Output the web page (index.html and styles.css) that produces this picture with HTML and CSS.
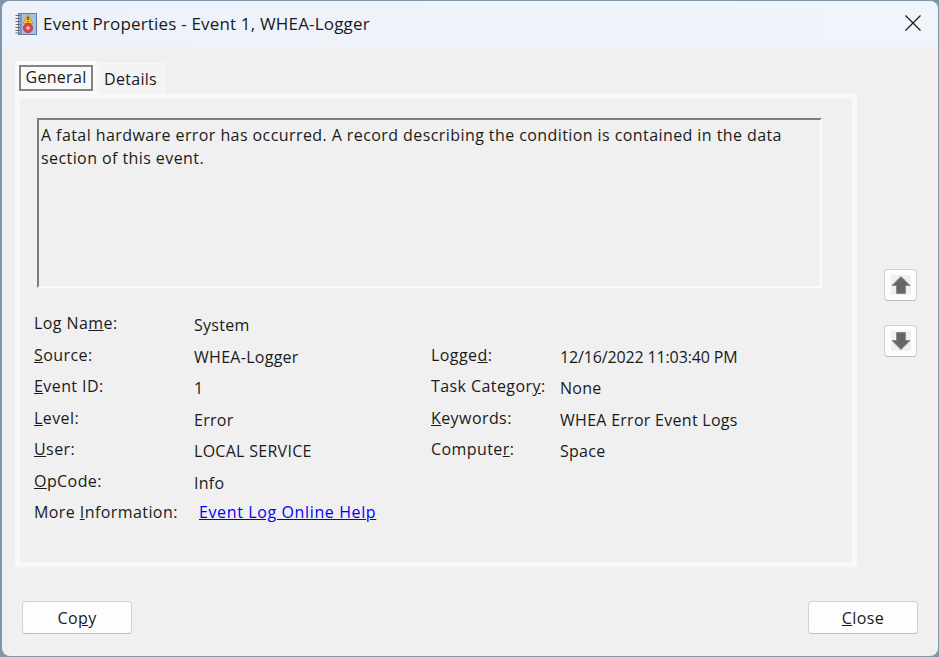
FILE: index.html
```html
<!DOCTYPE html>
<html lang="en">
<head>
<meta charset="utf-8">
<title>Event Properties - Event 1, WHEA-Logger</title>
<link rel="stylesheet" href="styles.css">
</head>
<body>
<div class="window">
  <header class="titlebar">
    <svg class="app-icon" width="22" height="24" viewBox="0 0 22 24">
      <rect x="3.500" y="1.500" width="18" height="21" fill="#a9c0e3" stroke="#5f7ba8"/>
      <path d="M6 1.500V22.500" stroke="#7f98c2" stroke-width="2"/>
      <path d="M.5 3.500h5M.5 6.500h5M.5 9.500h5M.5 12.500h5M.5 15.500h5M.5 18.500h5M.5 21h5" stroke="#6d6d6d" stroke-width="1.200"/>
      <path d="M13 1.500 18 11.500H8Z" fill="#f4c531" stroke="#a98a1a" stroke-width=".6"/>
      <path d="M13 4.500v3.500M13 9v1" stroke="#333" stroke-width="1.300"/>
      <circle cx="13" cy="16" r="4.700" fill="#d9474c" stroke="#a83034" stroke-width=".7"/>
      <circle cx="13" cy="16" r="1.700" fill="#f2c4c4"/>
    </svg>
    <span class="title">Event Properties - Event 1, WHEA-Logger</span>
    <svg class="close-x" width="16" height="16" viewBox="0 0 16 16">
      <path d="M.5.500 15.500 15.500M15.500.500.500 15.500" stroke="#1a1a1a" stroke-width="1.200" fill="none"/>
    </svg>
  </header>

  <main class="content">
    <div class="tabs">
      <div class="tab tab-active"><span class="tab-focus">General</span></div>
      <div class="tab">Details</div>
    </div>
    <div class="main-row">
      <section class="panel">
        <div class="description">A fatal hardware error has occurred. A record describing the condition is contained in the data section of this event.</div>
        <div class="fields">
          <span class="label">Log Na<u>m</u>e:</span><span class="value">System</span><span></span><span></span>
          <span class="label"><u>S</u>ource:</span><span class="value">WHEA-Logger</span><span class="label">Logge<u>d</u>:</span><span class="value value-date">12/16/2022 11:03:40 PM</span>
          <span class="label"><u>E</u>vent ID:</span><span class="value">1</span><span class="label">Task Categor<u>y</u>:</span><span class="value">None</span>
          <span class="label"><u>L</u>evel:</span><span class="value">Error</span><span class="label"><u>K</u>eywords:</span><span class="value">WHEA Error Event Logs</span>
          <span class="label"><u>U</u>ser:</span><span class="value">LOCAL SERVICE</span><span class="label">Compute<u>r</u>:</span><span class="value">Space</span>
          <span class="label"><u>O</u>pCode:</span><span class="value">Info</span><span></span><span></span>
          <span class="label">More <u>I</u>nformation:</span><a class="help-link" href="#">Event Log Online Help</a>
        </div>
      </section>
      <div class="nav-buttons">
        <button class="nav-btn" type="button" aria-label="Previous">
          <svg width="20" height="20" viewBox="0 0 20 20"><rect width="20" height="20" fill="#f0f0f0"/><path d="M10 1.500 19 10.500H14.500V18.500H5.500V10.500H1Z" fill="#666" stroke="#8a8a8a"/></svg>
        </button>
        <button class="nav-btn" type="button" aria-label="Next">
          <svg width="20" height="20" viewBox="0 0 20 20"><rect width="20" height="20" fill="#f0f0f0"/><path d="M10 18.500 19 9.500H14.500V1.500H5.500V9.500H1Z" fill="#666" stroke="#8a8a8a"/></svg>
        </button>
      </div>
    </div>
  </main>

  <footer class="footer">
    <button class="btn" type="button">Co<u>p</u>y</button>
    <button class="btn" type="button"><u>C</u>lose</button>
  </footer>
</div>
</body>
</html>
```

FILE: styles.css
```css
* { box-sizing: border-box; }
html, body { margin: 0; height: 100%; }
body {
  width: 939px;
  height: 657px;
  overflow: hidden;
  background: #7f95a8;
  font-family: "Open Sans", "Noto Sans", sans-serif;
  font-size: 16px;
  color: #1a1a1a;
  padding: 1px 1px 1px 2px;
}
.window {
  height: 100%;
  display: flex;
  flex-direction: column;
  background: #f0f0f0;
  border-radius: 8px;
  overflow: hidden;
}
.titlebar {
  flex: 0 0 46px;
  display: flex;
  align-items: center;
  padding: 0 17px 0 13px;
  background: linear-gradient(90deg, #edf2fa, #f0f5fb);
}
.app-icon { flex: none; margin-right: 6px; }
.title { flex: 1; font-size: 17px; letter-spacing: 0.18px; line-height: 24px; }
.close-x { flex: none; margin-bottom: 2px; }
.content { flex: 1; padding: 13px 0 0 13px; }
.tabs { display: flex; align-items: flex-end; height: 34px; letter-spacing: 0.3px; }
.tab {
  height: 31px;
  width: 67px;
  margin-left: 1px;
  background: #f3f3f3;
  border: 1px solid #f8f8f8;
  border-bottom: 0;
  display: flex;
  align-items: center;
  justify-content: center;
  padding: 0 2px 0 0;
}
.tab-active {
  height: 34px;
  width: 82px;
  margin-left: 0;
  padding: 4px;
  background: #fafafa;
  position: relative;
  z-index: 1;
  margin-bottom: -1px;
  border: 0;
}
.tab-focus {
  width: 100%;
  height: 100%;
  display: flex;
  align-items: center;
  justify-content: center;
  border: 2px solid #858585;
  padding-bottom: 3px;
}
.main-row { display: flex; }
.panel {
  width: 842px;
  height: 473px;
  border: 5px solid #f8f8f8;
  padding: 19px 0 0 17px;
}
.description {
  width: 785px;
  height: 170px;
  padding: 4px 30px 0 2px;
  line-height: 23px;
  letter-spacing: 0.42px;
  border-style: solid;
  border-width: 2px;
  border-color: #7d7d7d #fafafa #fafafa #7d7d7d;
}
.fields {
  display: grid;
  grid-template-columns: 160px 237px 129px 1fr;
  grid-auto-rows: 31.500px;
  margin: 24px 0 0 -3px;
  line-height: 22px;
}
.label { letter-spacing: 0.42px; }
.value { padding-top: 2px; letter-spacing: 0.28px; }
.value-date { letter-spacing: -0.14px; }
.help-link {
  grid-column: 2 / 5;
  padding-left: 5px;
  color: #0000f5;
  letter-spacing: 0.62px;
  text-decoration: underline;
}
.nav-buttons {
  display: flex;
  flex-direction: column;
  gap: 24px;
  margin: 175px 0 0 27px;
}
.nav-btn, .btn {
  background: #fdfdfd;
  border: 1px solid #d2d2d2;
  border-bottom-color: #bcbcbc;
  border-radius: 4px;
  padding: 0;
  color: inherit;
  font: inherit;
}
.nav-btn {
  width: 33px;
  height: 32px;
  display: flex;
  align-items: center;
  justify-content: center;
}
.footer {
  display: flex;
  justify-content: space-between;
  padding: 0 20px 22px 20px;
}
.btn { width: 110px; height: 33px; letter-spacing: 0.4px; }
```
